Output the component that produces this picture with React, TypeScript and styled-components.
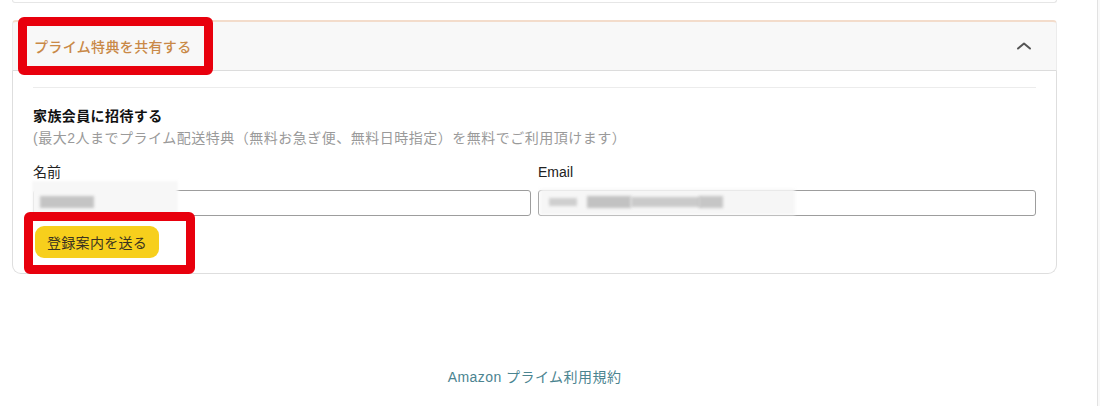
import styled, { createGlobalStyle } from 'styled-components';

const GlobalStyle = createGlobalStyle`
  html, body {
    margin: 0;
    padding: 0;
    background: #fff;
  }
  body {
    font-family: 'Liberation Sans', 'Noto Sans CJK JP', sans-serif;
    color: #111;
  }
`;

const Page = styled.div`
  display: flex;
  width: 1100px;
  height: 406px;
  overflow: hidden;
`;

const Main = styled.div`
  flex: 1;
  padding: 0 40px 0 12px;
`;

const ScrollTrack = styled.div`
  width: 2px;
  border-left: 1px solid #e2e2e2;
  background: #f9f9f9;
`;

const PrevCard = styled.div`
  height: 2px;
  border: 1px solid #e6e6e6;
  border-top: none;
  border-radius: 0 0 6px 6px;
`;

const Section = styled.section`
  position: relative;
  margin-top: 17px;
`;

const Header = styled.div`
  display: flex;
  align-items: center;
  justify-content: space-between;
  height: 48px;
  padding: 0 24px 0 21px;
  background: #f8f8f8;
  border-top: 2px solid #f3dccb;
  border-left: 1px solid #ececec;
  border-right: 1px solid #ececec;
  border-bottom: 1px solid #dcdcdc;
  border-radius: 4px 4px 0 0;
`;

const HeaderTitle = styled.span`
  font-size: 14px;
  letter-spacing: 0.35px;
  color: #c98947;
  font-weight: 500;
`;

const Panel = styled.div`
  border: 1px solid #dedede;
  border-top: none;
  border-radius: 0 0 9px 9px;
  padding: 16px 20px 15px;
`;

const Divider = styled.div`
  height: 1px;
  background: #ececec;
  margin-bottom: 18px;
`;

const Heading = styled.div`
  font-size: 14px;
  line-height: 20px;
  letter-spacing: 0.4px;
  font-weight: bold;
  color: #111;
`;

const Note = styled.div`
  margin-top: 2px;
  font-size: 14px;
  line-height: 20px;
  letter-spacing: 0.5px;
  color: #9a9a9a;
`;

const Fields = styled.div`
  display: grid;
  grid-template-columns: 1fr 1fr;
  gap: 7px;
  margin-top: 14px;
`;

const Field = styled.label`
  display: flex;
  flex-direction: column;
  gap: 8px;
`;

const FieldLabel = styled.span`
  font-size: 14px;
  line-height: 20px;
  color: #222;
`;

const InputBox = styled.div`
  position: relative;
  height: 24px;
  border: 1px solid #9d9d9d;
  border-radius: 3px;
  background: #fff;
`;

const Redaction = styled.span<{ $left: number; $width: number; $tone: string; $top?: number; $height?: number }>`
  position: absolute;
  left: ${(p) => p.$left}px;
  top: ${(p) => p.$top ?? 5}px;
  width: ${(p) => p.$width}px;
  height: ${(p) => p.$height ?? 12}px;
  background: ${(p) => p.$tone};
  filter: blur(1.5px);
`;

const SendButton = styled.button`
  margin: 10px 0 0 2px;
  height: 32px;
  padding: 0 12px;
  border: none;
  border-radius: 9px;
  background: #f7cf1c;
  font-family: inherit;
  font-size: 14px;
  letter-spacing: 0.3px;
  color: #3a3320;
  cursor: pointer;
`;

const Callout = styled.div<{ $left: number; $top: number; $width: number; $height: number }>`
  position: absolute;
  left: ${(p) => p.$left}px;
  top: ${(p) => p.$top}px;
  width: ${(p) => p.$width}px;
  height: ${(p) => p.$height}px;
  box-sizing: border-box;
  border: 9px solid #e8000d;
  border-radius: 6px;
  pointer-events: none;
`;

const Footer = styled.div`
  margin-top: 93px;
  text-align: center;
`;

const TermsLink = styled.a`
  font-size: 14px;
  line-height: 20px;
  letter-spacing: 0.45px;
  color: #4b8490;
  text-decoration: none;
`;

function ChevronUp() {
  return (
    <svg width="16" height="10" viewBox="0 0 16 10" fill="none">
      <path d="M2 7.5 L8 2.5 L14 7.5" stroke="#555" strokeWidth="2" strokeLinecap="round" strokeLinejoin="round" />
    </svg>
  );
}

export default function App() {
  return (
    <Page>
      <GlobalStyle />
      <Main>
        <PrevCard />
        <Section>
          <Header>
            <HeaderTitle>プライム特典を共有する</HeaderTitle>
            <ChevronUp />
          </Header>
          <Panel>
            <Divider />
            <Heading>家族会員に招待する</Heading>
            <Note>(最大2人までプライム配送特典（無料お急ぎ便、無料日時指定）を無料でご利用頂けます）</Note>
            <Fields>
              <Field>
                <FieldLabel>名前</FieldLabel>
                <InputBox>
                  <Redaction $left={-2} $top={-10} $width={146} $height={34} $tone="#f7f7f7" />
                  <Redaction $left={6} $width={54} $tone="#c4c4c4" />
                </InputBox>
              </Field>
              <Field>
                <FieldLabel>Email</FieldLabel>
                <InputBox>
                  <Redaction $left={1} $top={-2} $width={255} $height={26} $tone="#f6f6f6" />
                  <Redaction $left={10} $top={7} $width={28} $height={8} $tone="#cfcfcf" />
                  <Redaction $left={48} $width={44} $tone="#c2c2c2" />
                  <Redaction $left={92} $top={6} $width={70} $height={10} $tone="#cacaca" />
                  <Redaction $left={160} $width={24} $tone="#c6c6c6" />
                </InputBox>
              </Field>
            </Fields>
            <SendButton type="button">登録案内を送る</SendButton>
          </Panel>
          <Callout $left={6} $top={-3} $width={195} $height={58} />
          <Callout $left={12} $top={192} $width={171} $height={62} />
        </Section>
        <Footer>
          <TermsLink href="#">Amazon プライム利用規約</TermsLink>
        </Footer>
      </Main>
      <ScrollTrack />
    </Page>
  );
}
